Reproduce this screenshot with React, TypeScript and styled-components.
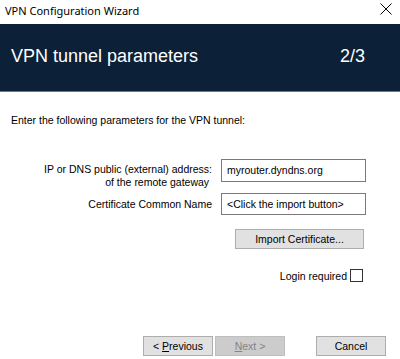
import styled, { createGlobalStyle } from "styled-components";

const GlobalStyle = createGlobalStyle`
  html, body {
    margin: 0;
    padding: 0;
    background: #ffffff;
  }
  body {
    font-family: "Liberation Sans", Arial, sans-serif;
    font-size: 10.5px;
    color: #000000;
  }
`

export default function App() {
    return (
        <Window>
            <GlobalStyle />
            <TitleBar>
                <TitleText>VPN Configuration Wizard</TitleText>
                <CloseIcon viewBox="0 0 12 12">
                    <path d="M0.5 0.5 L11.5 11.5 M11.5 0.5 L0.5 11.5" stroke="#000" strokeWidth="1" fill="none" />
                </CloseIcon>
            </TitleBar>
            <Header>
                <HeaderTitle>VPN tunnel parameters</HeaderTitle>
                <Step>2/3</Step>
            </Header>
            <Body>
                <Intro>Enter the following parameters for the VPN tunnel:</Intro>
                <Form>
                    <Label>
                        IP or DNS public (external) address:
                        <br />
                        of the remote gateway&nbsp;
                    </Label>
                    <Field>myrouter.dyndns.org</Field>
                    <Label $single>Certificate Common Name</Label>
                    <Field>&lt;Click the import button&gt;</Field>
                    <Spacer />
                    <Button $wide>Import Certificate...</Button>
                </Form>
                <CheckRow>
                    Login required
                    <Check />
                </CheckRow>
                <Footer>
                    <Button>&lt; <u>P</u>revious</Button>
                    <Button disabled><u>N</u>ext &gt;</Button>
                    <Button $gap>Cancel</Button>
                </Footer>
            </Body>
        </Window>
    )
}

const Window = styled.div`
  width: 400px;
  height: 359px;
  display: flex;
  flex-direction: column;
  background: #ffffff;
  overflow: hidden;
`

const TitleBar = styled.div`
  height: 24px;
  display: flex;
  align-items: center;
  justify-content: space-between;
  padding: 0 8px 0 5px;
  box-sizing: border-box;
`

const TitleText = styled.div`
  font-family: "Noto Sans", "Liberation Sans", sans-serif;
  font-size: 11px;
  margin-top: -4px;
`

const CloseIcon = styled.svg`
  width: 12px;
  height: 12px;
  margin-top: -6px;
`

const Header = styled.div`
  height: 67px;
  background: #0c2137;
  border-bottom: 1px solid #6a7887;
  display: flex;
  align-items: center;
  justify-content: space-between;
  padding: 0 35px 0 11px;
  color: #ffffff;
  font-family: "Liberation Sans", Arial, sans-serif;
  font-size: 18px;
`

const HeaderTitle = styled.div`
  margin-top: -3px;
`

const Step = styled.div`
  margin-top: -3px;
`

const Body = styled.div`
  flex: 1;
  display: flex;
  flex-direction: column;
  padding: 22px 14px 0 11px;
`

const Intro = styled.div`
  line-height: 13px;
`

const Form = styled.div`
  display: grid;
  grid-template-columns: 1fr 145px;
  grid-template-rows: 23px 22px 20px;
  column-gap: 9px;
  row-gap: 11px;
  margin: 32px 20px 0 0;
  align-items: start;
  & > :nth-child(5), & > :nth-child(6) {
    margin-top: 3px;
  }
`

const Label = styled.div<{ $single?: boolean }>`
  text-align: right;
  line-height: 13px;
  padding-top: ${p => (p.$single ? 5 : 4)}px;
`

const Field = styled.div`
  height: 100%;
  box-sizing: border-box;
  border: 1px solid #7a7a7a;
  padding: 4px 5px 0;
  line-height: 13px;
  white-space: nowrap;
`

const Spacer = styled.div``

const Button = styled.button<{ $wide?: boolean; $gap?: boolean }>`
  font-family: "Liberation Sans", Arial, sans-serif;
  font-size: 10.5px;
  width: ${p => (p.$wide ? "129px" : "70px")};
  height: 20px;
  padding: 0;
  margin-left: ${p => (p.$wide ? "14px" : p.$gap ? "29px" : "0")};
  background: #e1e1e1;
  border: 1px solid #adadad;
  color: #000000;
  &:disabled {
    background: #cccccc;
    border-color: #bfbfbf;
    color: #838383;
  }
  u {
    text-decoration: underline;
  }
`

const CheckRow = styled.div`
  display: flex;
  align-items: center;
  justify-content: flex-end;
  gap: 3px;
  margin: 23px 23px 0 0;
`

const Check = styled.span`
  width: 11px;
  height: 11px;
  border: 1px solid #333333;
  background: #ffffff;
`

const Footer = styled.div`
  display: flex;
  justify-content: flex-end;
  gap: 2px;
  margin-top: auto;
  margin-bottom: 3px;
`
